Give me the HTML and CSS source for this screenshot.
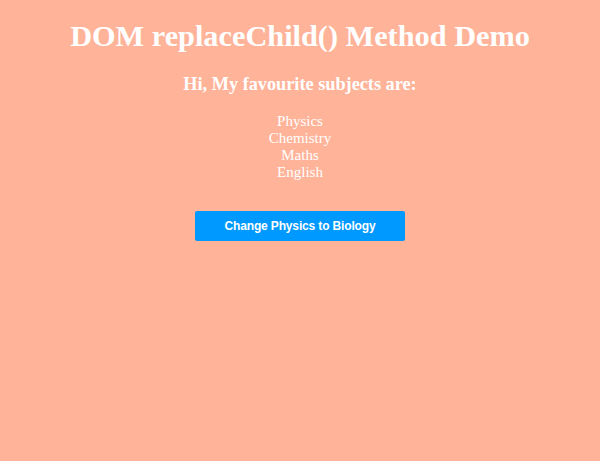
FILE: index.html
```html
<!DOCTYPE html>
<html>
<head>
<meta charset="utf-8">
<title>DOM replaceChild() Method Demo</title>
<link rel="stylesheet" href="styles.css">
</head>
<body>
<h1 class="title">DOM replaceChild() Method Demo</h1>
<h3 class="intro">Hi, My favourite subjects are:</h3>
<ul class="subjects">
  <li>Physics</li>
  <li>Chemistry</li>
  <li>Maths</li>
  <li>English</li>
</ul>
<div class="actions">
  <button class="swap-btn" type="button">Change Physics to Biology</button>
</div>
</body>
</html>
```

FILE: styles.css
```css
html, body {
  background: #ffb399;
}
body {
  margin: 8px;
  font-family: "Liberation Serif", "Times New Roman", serif;
  color: #fff;
  text-align: center;
}
.title {
  font-size: 30.3px;
  font-weight: bold;
  margin: 11px 0 0;
}
.intro {
  font-size: 18.25px;
  font-weight: bold;
  margin: 20px 0 0;
}
.subjects {
  list-style: none;
  padding: 0;
  margin: 18px 0 0;
  font-size: 15px;
  line-height: 17px;
}
.actions {
  margin-top: 30px;
}
.swap-btn {
  width: 210px;
  height: 30px;
  border: none;
  border-radius: 2px;
  background: #0099ff;
  color: #fff;
  font-family: "Liberation Sans", Arial, sans-serif;
  font-size: 12px;
  font-weight: bold;
  letter-spacing: -0.15px;
  cursor: pointer;
}
```
